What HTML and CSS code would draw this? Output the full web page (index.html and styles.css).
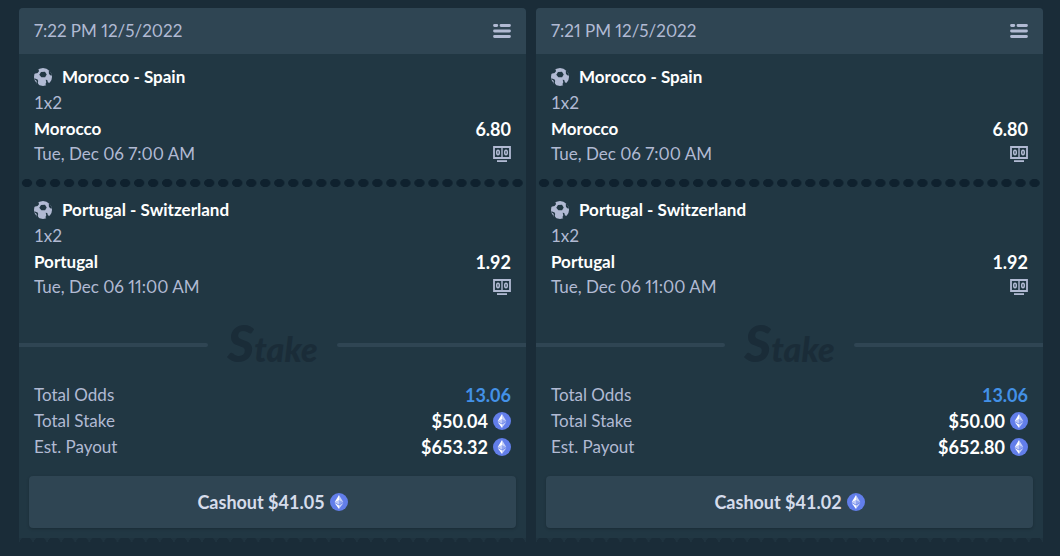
FILE: index.html
```html
<!DOCTYPE html>
<html lang="en">
<head>
  <meta charset="UTF-8">
  <meta name="viewport" content="width=device-width, initial-scale=1.0">
  <title>My Bets</title>
  <link rel="stylesheet" href="styles.css">
</head>
<body>

  <!-- shared icons -->
  <svg class="sprite" aria-hidden="true">
    <symbol id="icon-list" viewBox="0 0 18 16">
      <path d="M1.500 2.500h2.300M8 2.500h8.500M1.500 8h15M1.500 13.500h15" fill="none" stroke="currentColor" stroke-width="2.800" stroke-linecap="round"/>
    </symbol>
    <symbol id="icon-ball" viewBox="0 0 18 18">
      <circle cx="9" cy="9" r="9" fill="currentColor"/>
      <g fill="#213743">
        <path d="m7 4 4-.2 1.700 2.700-1.600 2.700-3.700.1-2.100-2.500z"/>
        <path d="M1.500 2 4.700 1.700l.3 1.500-1.400 1.800-2.200.5L0 5.500z"/>
        <path d="m15 1.500 3.200 5.800-1.500.3-1.700-1.500-.2-2z"/>
        <path d="M0 11l1-.6 2.600 1.100.6 1.400-.4 1.800.9 2.300-1.500 1.300-.8-3.500.4-1.700-1.300-1.200z"/>
        <path d="m11.700 11.800 1.500.2.800 2.400 2.400.6-2.400 3-1.900-.3-.6-1.600.8-1.900z"/>
      </g>
    </symbol>
    <symbol id="icon-score" viewBox="0 0 18 16">
      <path fill="none" stroke="currentColor" stroke-width="1.800" d="M1 1h16v11H1z"/>
      <path fill="none" stroke="currentColor" stroke-width="1.400" d="M9 1v11"/>
      <g fill="none" stroke="currentColor" stroke-width="1.500">
        <ellipse cx="5" cy="6.500" rx="1.300" ry="2.200"/>
        <ellipse cx="13" cy="6.500" rx="1.300" ry="2.200"/>
      </g>
      <path fill="currentColor" d="M4 14.200h10V16H4z"/>
    </symbol>
    <symbol id="icon-eth" viewBox="0 0 18 18">
      <circle cx="9" cy="9" r="9" fill="#627eea"/>
      <path fill="#fff" fill-opacity=".65" d="M9 2v5.200l4.400 2z"/>
      <path fill="#fff" d="M9 2 4.600 9.200 9 7.200z"/>
      <path fill="#fff" fill-opacity=".65" d="M9 12.500v3.500l4.400-6.100z"/>
      <path fill="#fff" d="M9 16v-3.500L4.600 9.900z"/>
      <path fill="#fff" fill-opacity=".3" d="m9 11.800 4.400-2.600L9 7.200z"/>
      <path fill="#fff" fill-opacity=".6" d="m4.600 9.200 4.400 2.600V7.200z"/>
    </symbol>
  </svg>

  <main class="bets">

    <article class="bet">
      <header class="bet-header">
        <span>7:22 PM 12/5/2022</span>
        <button class="icon-button" type="button" aria-label="Bet details"><svg class="list-icon"><use href="#icon-list"/></svg></button>
      </header>
      <section class="leg">
        <h2 class="match"><svg class="ball-icon"><use href="#icon-ball"/></svg>Morocco - Spain</h2>
        <p class="line">1x2</p>
        <p class="line pick"><span>Morocco</span><span class="number">6.80</span></p>
        <p class="line date"><span>Tue, Dec 06 7:00 AM</span><svg class="score-icon"><use href="#icon-score"/></svg></p>
      </section>
      <div class="dots"></div>
      <section class="leg">
        <h2 class="match"><svg class="ball-icon"><use href="#icon-ball"/></svg>Portugal - Switzerland</h2>
        <p class="line">1x2</p>
        <p class="line pick"><span>Portugal</span><span class="number">1.92</span></p>
        <p class="line date"><span>Tue, Dec 06 11:00 AM</span><svg class="score-icon"><use href="#icon-score"/></svg></p>
      </section>
      <div class="brand"><span class="logo"><span class="logo-initial">S</span>take</span></div>
      <dl class="totals">
        <div class="line"><dt>Total Odds</dt><dd class="number odds">13.06</dd></div>
        <div class="line"><dt>Total Stake</dt><dd class="number">$50.04<svg class="coin"><use href="#icon-eth"/></svg></dd></div>
        <div class="line"><dt>Est. Payout</dt><dd class="number">$653.32<svg class="coin"><use href="#icon-eth"/></svg></dd></div>
      </dl>
      <button class="cashout" type="button">Cashout $41.05<svg class="coin"><use href="#icon-eth"/></svg></button>
    </article>

    <article class="bet">
      <header class="bet-header">
        <span>7:21 PM 12/5/2022</span>
        <button class="icon-button" type="button" aria-label="Bet details"><svg class="list-icon"><use href="#icon-list"/></svg></button>
      </header>
      <section class="leg">
        <h2 class="match"><svg class="ball-icon"><use href="#icon-ball"/></svg>Morocco - Spain</h2>
        <p class="line">1x2</p>
        <p class="line pick"><span>Morocco</span><span class="number">6.80</span></p>
        <p class="line date"><span>Tue, Dec 06 7:00 AM</span><svg class="score-icon"><use href="#icon-score"/></svg></p>
      </section>
      <div class="dots"></div>
      <section class="leg">
        <h2 class="match"><svg class="ball-icon"><use href="#icon-ball"/></svg>Portugal - Switzerland</h2>
        <p class="line">1x2</p>
        <p class="line pick"><span>Portugal</span><span class="number">1.92</span></p>
        <p class="line date"><span>Tue, Dec 06 11:00 AM</span><svg class="score-icon"><use href="#icon-score"/></svg></p>
      </section>
      <div class="brand"><span class="logo"><span class="logo-initial">S</span>take</span></div>
      <dl class="totals">
        <div class="line"><dt>Total Odds</dt><dd class="number odds">13.06</dd></div>
        <div class="line"><dt>Total Stake</dt><dd class="number">$50.00<svg class="coin"><use href="#icon-eth"/></svg></dd></div>
        <div class="line"><dt>Est. Payout</dt><dd class="number">$652.80<svg class="coin"><use href="#icon-eth"/></svg></dd></div>
      </dl>
      <button class="cashout" type="button">Cashout $41.02<svg class="coin"><use href="#icon-eth"/></svg></button>
    </article>

  </main>

</body>
</html>
```

FILE: styles.css
```css
* {
  box-sizing: border-box;
}

body {
  margin: 0;
  background-color: #1a2c38;
  color: #b1bad3;
  font-family: Lato, sans-serif;
  font-size: 17px;
  line-height: 26px;
}

h2, p, dl, dd {
  margin: 0;
}

button {
  border: 0;
  font: inherit;
  color: inherit;
  cursor: pointer;
}

.sprite {
  display: none;
}

.bets {
  display: grid;
  grid-template-columns: 1fr 1fr;
  gap: 10px;
  padding: 8px 17px 0 19px;
}

.bet {
  display: flex;
  flex-direction: column;
  background-color: #213743;
  border-radius: 4px 4px 0 0;
}

/* perforated bottom edge */
.bet::after {
  content: "";
  height: 4px;
  margin-top: 10px;
  background: radial-gradient(ellipse 6px 4px at 7px 3px, #1a2c38 95%, #1f333f) 0 0 / 14px 4px round;
}

.bet-header {
  display: flex;
  justify-content: space-between;
  align-items: center;
  height: 46px;
  padding: 0 15px;
  background-color: #2f4553;
  border-radius: 4px 4px 0 0;
}

.bet-header,
.date {
  font-variant-numeric: proportional-nums;
}

.icon-button {
  display: flex;
  padding: 0;
  background: none;
}

.list-icon,
.score-icon {
  width: 18px;
  height: 16px;
}

.ball-icon,
.coin {
  width: 18px;
  height: 18px;
}

.leg {
  padding: 10px 15px 13px;
}

.match {
  display: flex;
  align-items: center;
  gap: 10px;
  font-size: 17px;
}

.match,
.pick,
.number {
  color: #fff;
  font-weight: 700;
}

.number {
  font-size: 18px;
}

.ball-icon {
  color: #b1bad3;
}

.line {
  display: flex;
  justify-content: space-between;
  align-items: center;
}

.date {
  line-height: 24px;
}

.dots {
  height: 8px;
  margin: 0 1px;
  background: radial-gradient(ellipse 5px 4px, #0f212e 95%, transparent 110%) 0 0 / 14px 8px round;
}

.brand {
  display: flex;
  align-items: center;
  gap: 19px;
  height: 46px;
  margin: 10px 0 14px;
}

.brand::before,
.brand::after {
  content: "";
  flex: 1;
  height: 4px;
  background-color: #2f4553;
}

.brand::before {
  border-radius: 0 2px 2px 0;
}

.brand::after {
  border-radius: 2px 0 0 2px;
}

.logo {
  color: #1a2c38;
  font-size: 34px;
  font-style: italic;
  font-weight: 900;
  line-height: 46px;
}

.logo-initial {
  font-size: 52px;
}

.totals {
  padding: 0 15px;
}

dd {
  display: flex;
  align-items: center;
  gap: 5px;
}

.odds {
  color: #4391e7;
}

.cashout {
  display: flex;
  justify-content: center;
  align-items: center;
  gap: 5px;
  height: 52px;
  margin: 16px 10px 0;
  background-color: #2f4553;
  border-radius: 4px;
  box-shadow: 0 1px 3px rgba(0, 0, 0, 0.2);
  color: #d5dceb;
  font-size: 18px;
  font-weight: 700;
}
```
